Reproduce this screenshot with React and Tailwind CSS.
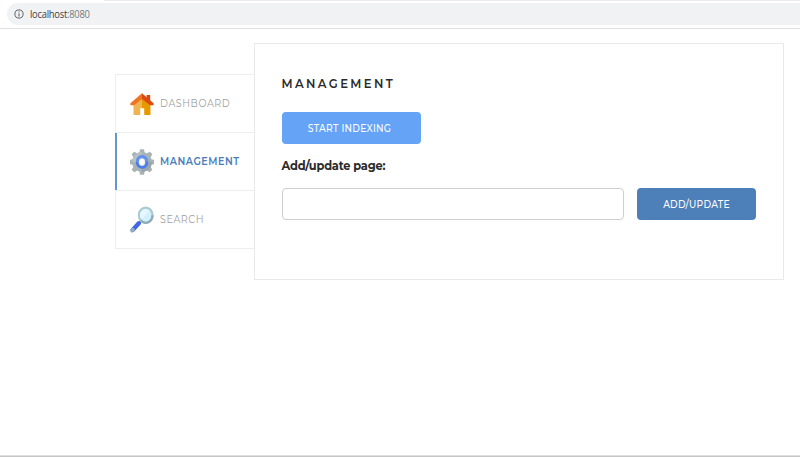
import React from 'react';

function HouseIcon() {
  return (
    <svg className="h-6 w-6 shrink-0" viewBox="0 0 24 24">
      <path d="M16.6 3h3.6v6h-3.6z" fill="#d84a10" />
      <path d="M3.5 11 12 4v19H3.5z" fill="#efb450" />
      <path d="M12 4l8.5 8v11H12z" fill="#e59a00" />
      <path d="M10.2 16.2h4V23h-4z" fill="#fff" />
      <path d="M12 1.2.4 11.2v2h3.6L12 7z" fill="#ee7423" />
      <path d="M12 1.2 23.6 11.2v2H20L12 7z" fill="#dc4a0c" />
    </svg>
  );
}

const TEETH = [0, 45, 90, 135, 180, 225, 270, 315];

function GearIcon() {
  return (
    <svg className="h-[26px] w-6 shrink-0" viewBox="0 0 24 26" preserveAspectRatio="none">
      <g fill="#a9b3b6">
        {TEETH.map((angle) => (
          <path key={angle} d="M9.9 0.8q0-.6.6-.6h3q.6 0 .6.6l.9 4.6H9z" transform={`rotate(${angle} 12 13)`} />
        ))}
        <circle cx="12" cy="13" r="9.9" />
      </g>
      <path d="M12 3.1A9.9 9.9 0 0 0 2.1 13L12 13z" fill="#b6c1c3" />
      <path d="M12 22.9a9.9 9.9 0 0 0 9.9-9.9L12 13z" fill="#98a5a9" />
      <ellipse cx="12" cy="13" rx="4.8" ry="5.4" fill="#d5dcdf" stroke="#4a7cf0" strokeWidth="2.8" />
      <path d="M7.2 13a4.8 5.4 0 0 1 9.6 0" fill="none" stroke="#6292f4" strokeWidth="2.8" />
      <ellipse cx="12" cy="13" rx="2.6" ry="3" fill="#fff" />
    </svg>
  );
}

function SearchIcon() {
  return (
    <svg className="h-[27px] w-6 shrink-0" viewBox="0 0 24 27">
      <path d="M10.8 15.2 8.5 18" stroke="#91aeb7" strokeWidth="2.4" />
      <path d="M8.8 17.3 2.7 24" stroke="#4267e2" strokeWidth="4.3" strokeLinecap="round" />
      <path d="M2.9 23.8 2.2 24.6" stroke="#8eafbd" strokeWidth="3.8" strokeLinecap="round" />
      <ellipse cx="15.7" cy="9.2" rx="6.8" ry="7.6" fill="#d2effc" stroke="#a9c9d1" strokeWidth="2.2" />
      <path d="M22.5 9.2a6.8 7.6 0 0 1-11.6 5.4" fill="none" stroke="#8eabb5" strokeWidth="2.2" />
      <path d="M11.6 13.2 19.4 4.8a5.7 6.4 0 0 0-8.9 1.7 6 6.4 0 0 0 1.1 6.7z" fill="#e6f8ff" />
    </svg>
  );
}

function InfoIcon() {
  return (
    <svg className="h-[10px] w-[10px]" viewBox="0 0 10 10" fill="none" stroke="#5f6368">
      <circle cx="5" cy="5" r="4.1" strokeWidth="1" />
      <path d="M5 4.4v3M5 2.4v1.1" strokeWidth="1.1" />
    </svg>
  );
}

function NavItem({ icon, label, active }) {
  return (
    <a className={`relative flex h-[58px] items-center border-b border-[#eeeeee] pl-[14px] text-[9.6px] tracking-[0.55px] whitespace-nowrap ${active ? 'font-semibold text-[#4a7db8]' : 'text-[#9f9f9f]'}`}>
      {active && <span className="absolute top-0 -left-px h-[57px] w-[2px] bg-[#6797ca]" />}
      {icon}
      <span className="mt-[2px] ml-[6px] scale-y-[1.16]">{label}</span>
    </a>
  );
}

export default function App() {
  return (
    <div className="flex h-[457px] w-[800px] flex-col overflow-hidden bg-white font-[Montserrat,Inter,sans-serif] text-[#2b2b2b]">
      <header className="flex h-[29px] shrink-0 flex-col border-b border-[#dfe1e5]">
        <div className="ml-[104px] h-px shrink-0 bg-[#e9ebee]" />
        <div className="mt-[2px] ml-[7px] flex h-[22px] items-center rounded-l-full bg-[#f1f2f4] pl-[7px]">
          <InfoIcon />
          <span className="mt-[2px] ml-[6px] scale-y-[1.12] font-['Open_Sans',sans-serif] text-[9.4px] tracking-[-0.25px] text-[#3c4043]">
            localhost<span className="text-[#777b80]">:8080</span>
          </span>
        </div>
      </header>
      <main className="flex flex-1 items-start pt-[14px] pl-[115px]">
        <nav className="mt-[31px] w-[139px] border-t border-l border-[#eeeeee]">
          <NavItem icon={<HouseIcon />} label="DASHBOARD" />
          <NavItem icon={<GearIcon />} label="MANAGEMENT" active />
          <NavItem icon={<SearchIcon />} label="SEARCH" />
        </nav>
        <section className="h-[237px] w-[530px] border border-[#e9e9e9] pr-[27px] pl-[26.5px] pt-[30px]">
          <h1 className="h-[18px] scale-y-[1.16] text-[11.6px] leading-[18px] font-semibold tracking-[2.4px]">MANAGEMENT</h1>
          <button className="mt-5 flex h-8 w-[139px] items-center justify-center rounded-[4px] bg-[#65a3f6] pr-[3px] text-[9.2px] tracking-[0.4px] text-white">
            <span className="mt-px scale-y-[1.16] font-medium tracking-[0.3px]">START INDEXING</span>
          </button>
          <h2 className="mt-[14px] h-4 scale-y-[1.12] text-[11.4px] leading-4 font-bold tracking-[-0.2px]">Add/update page:</h2>
          <div className="mt-[14px] flex items-center gap-[13px]">
            <input className="h-8 w-[342.5px] rounded-[4px] border border-[#cecece] outline-none" />
            <button className="flex h-8 w-[119px] items-center justify-center rounded-[4px] bg-[#4d7fb9] text-[9.2px] text-white">
              <span className="mt-px scale-y-[1.16] font-medium tracking-[0.25px]">ADD/UPDATE</span>
            </button>
          </div>
        </section>
      </main>
      <footer className="h-[2px] shrink-0 border-t border-[#dedede] bg-[#c6c6c6]" />
    </div>
  );
}
